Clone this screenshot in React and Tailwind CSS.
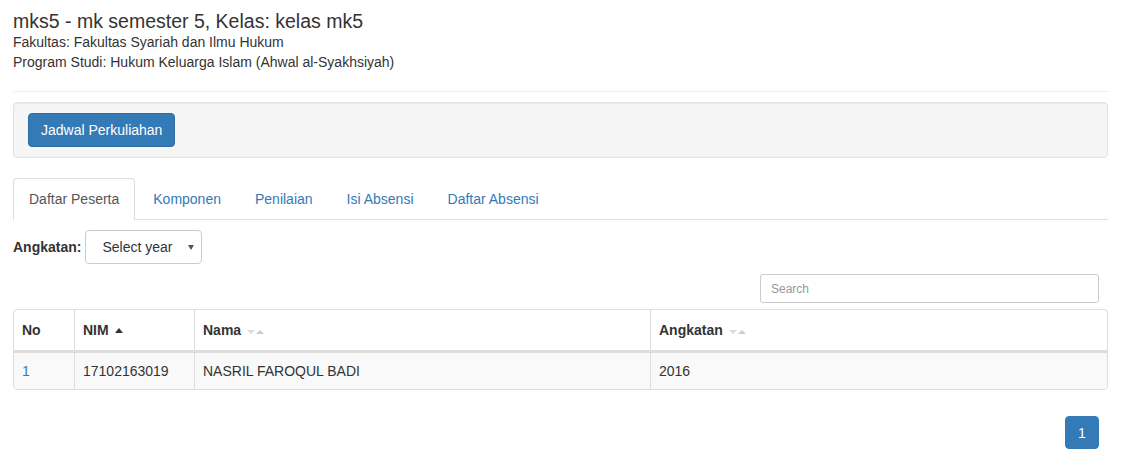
import React from 'react';

function SortAsc() {
  return (
    <svg width="8" height="5" viewBox="0 0 8 5" className="ml-[6px] mt-[1px]">
      <path d="M0 5 L4 0 L8 5 Z" fill="#333" />
    </svg>
  );
}

function SortBoth() {
  return (
    <svg width="18" height="6" viewBox="0 0 18 6" className="ml-[6px] mt-[1px]">
      <path d="M0 2 L8 2 L4 6 Z" fill="#ddd" />
      <path d="M9 6 L13 2 L17 6 Z" fill="#ccc" />
    </svg>
  );
}

const tabs = ['Daftar Peserta', 'Komponen', 'Penilaian', 'Isi Absensi', 'Daftar Absensi'];

export default function App() {
  return (
    <div className="min-h-[462px] bg-white pl-[13px] pr-[19px] font-['Liberation_Sans',Arial,sans-serif] text-[14px] leading-[20px] text-[#333]">
      <h4 className="pt-[11px] text-[19.5px] leading-[21px]">mks5 - mk semester 5, Kelas: kelas mk5</h4>
      <div>Fakultas: Fakultas Syariah dan Ilmu Hukum</div>
      <div>Program Studi: Hukum Keluarga Islam (Ahwal al-Syakhsiyah)</div>

      <hr className="mt-[19px] border-t border-[#eee]" />

      <div className="mt-[10px] rounded-[4px] border border-[#e3e3e3] bg-[#f5f5f5] px-[14px] py-[10px] shadow-[inset_0_1px_1px_rgba(0,0,0,0.05)]">
        <button className="h-[34px] rounded-[4px] border border-[#2e6da4] bg-[#337ab7] px-[12px] text-white">
          Jadwal Perkuliahan
        </button>
      </div>

      <ul className="mt-[20px] flex border-b border-[#ddd]">
        {tabs.map((t, i) => (
          <li key={t} className="-mb-px mr-[2px]">
            <a
              className={
                i === 0
                  ? 'block rounded-t-[4px] border border-[#ddd] border-b-transparent bg-white px-[15px] py-[10px] text-[#555]'
                  : 'block rounded-t-[4px] border border-transparent px-[15px] py-[10px] text-[#337ab7]'
              }
            >
              {t}
            </a>
          </li>
        ))}
      </ul>

      <div className="mt-[10px] flex items-center gap-[4px]">
        <span className="font-bold">Angkatan:</span>
        <div className="flex h-[34px] w-[117px] items-center justify-between rounded-[4px] border border-[#ccc] bg-white pl-[16px] pr-[7px]">
          <span>Select year</span>
          <svg width="6" height="5" viewBox="0 0 6 5">
            <path d="M0 0 L6 0 L3 5 Z" fill="#555" />
          </svg>
        </div>
      </div>

      <div className="mt-[10px] flex justify-end pr-[9px]">
        <div className="flex h-[29px] w-[339px] items-center rounded-[3px] border border-[#ccc] bg-white pl-[10px] text-[12px] text-[#999]">
          Search
        </div>
      </div>

      <div className="mt-[6px] overflow-hidden rounded-[4px] border border-[#ddd]">
        <div className="grid grid-cols-[60px_120px_456px_1fr] border-b-2 border-[#ddd] font-bold">
          <div className="flex h-[40px] items-center px-[8px]">No</div>
          <div className="flex h-[40px] items-center border-l border-[#ddd] px-[8px]">
            NIM <SortAsc />
          </div>
          <div className="flex h-[40px] items-center border-l border-[#ddd] px-[8px]">
            Nama <SortBoth />
          </div>
          <div className="flex h-[40px] items-center border-l border-[#ddd] px-[8px]">
            Angkatan <SortBoth />
          </div>
        </div>
        <div className="grid grid-cols-[60px_120px_456px_1fr] border-t border-[#ddd] bg-[#f9f9f9]">
          <div className="flex h-[36px] items-center px-[8px] text-[#337ab7]">1</div>
          <div className="flex h-[36px] items-center border-l border-[#ddd] px-[8px]">17102163019</div>
          <div className="flex h-[36px] items-center border-l border-[#ddd] px-[8px]">NASRIL FAROQUL BADI</div>
          <div className="flex h-[36px] items-center border-l border-[#ddd] px-[8px]">2016</div>
        </div>
      </div>

      <div className="mt-[26px] flex justify-end pr-[9px]">
        <span className="flex h-[33px] w-[34px] items-center justify-center rounded-[4px] border border-[#337ab7] bg-[#337ab7] text-white">
          1
        </span>
      </div>
    </div>
  );
}
